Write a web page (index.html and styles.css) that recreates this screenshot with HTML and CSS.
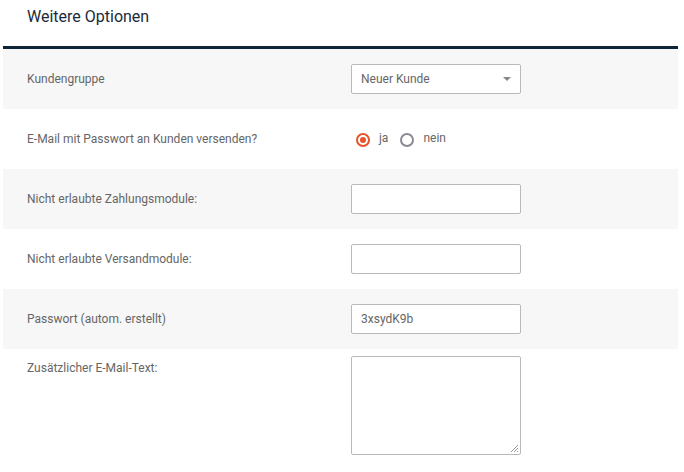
FILE: index.html
```html
<!DOCTYPE html>
<html lang="de">
<head>
<meta charset="utf-8">
<link rel="stylesheet" href="styles.css">
</head>
<body>
<div class="panel">
  <div class="panel-head">
    <h2 class="panel-title">Weitere Optionen</h2>
  </div>
  <div class="rows">
    <div class="row alt">
      <div class="label">Kundengruppe</div>
      <div class="field">
        <div class="select"><span>Neuer Kunde</span><span class="caret"></span></div>
      </div>
    </div>
    <div class="row">
      <div class="label">E-Mail mit Passwort an Kunden versenden?</div>
      <div class="field radios">
        <span class="radio checked"></span><span class="radio-label">ja</span>
        <span class="radio"></span><span class="radio-label">nein</span>
      </div>
    </div>
    <div class="row alt">
      <div class="label">Nicht erlaubte Zahlungsmodule:</div>
      <div class="field"><div class="input"></div></div>
    </div>
    <div class="row">
      <div class="label">Nicht erlaubte Versandmodule:</div>
      <div class="field"><div class="input"></div></div>
    </div>
    <div class="row alt">
      <div class="label">Passwort (autom. erstellt)</div>
      <div class="field"><div class="input">3xsydK9b</div></div>
    </div>
    <div class="row top">
      <div class="label">Zusätzlicher E-Mail-Text:</div>
      <div class="field">
        <div class="textarea">
          <svg class="grip" width="9" height="9" viewBox="0 0 9 9">
            <path d="M8 1 L1 8 M8 4 L4 8 M8 7 L7 8" stroke="#999" stroke-width="1" fill="none"/>
          </svg>
        </div>
      </div>
    </div>
  </div>
</div>
</body>
</html>
```
FILE: styles.css
```css
* { box-sizing: border-box; }
body {
  margin: 0;
  background: #fff;
  font-family: Roboto, "Noto Sans", sans-serif;
}
.panel {
  margin: 0 6px 0 3px;
}
.panel-head {
  border-bottom: 3px solid #0e2538;
  height: 49px;
  padding: 7px 24px 0;
}
.panel-title {
  margin: 0;
  font-size: 16px;
  font-weight: 400;
  color: #1c2b3a;
  line-height: 20px;
}
.row {
  display: grid;
  grid-template-columns: 348px 1fr;
  align-items: center;
  height: 60px;
  background: #fff;
}
.row.alt { background: #f7f7f7; }
.row.top {
  align-items: start;
  height: 112px;
  padding-top: 7px;
}
.label {
  padding-left: 24px;
  font-size: 12px;
  color: #666;
}
.row.top .label { padding-top: 5px; }
.select, .input {
  width: 170px;
  height: 30px;
  border: 1px solid #b9b9b9;
  border-radius: 2px;
  background: #fff;
  font-size: 12px;
  color: #666;
  display: flex;
  align-items: center;
  padding: 0 9px;
}
.select { justify-content: space-between; }
.caret {
  width: 0;
  height: 0;
  border-left: 4px solid transparent;
  border-right: 4px solid transparent;
  border-top: 4px solid #888;
}
.radios {
  display: flex;
  align-items: center;
  padding-left: 5px;
  padding-top: 2px;
}
.radio {
  width: 14px;
  height: 14px;
  border-radius: 50%;
  border: 2px solid #8a8a95;
  background: #fff;
  position: relative;
}
.radio.checked { border-color: #e8532b; }
.radio.checked::after {
  content: "";
  position: absolute;
  left: 2px;
  top: 2px;
  width: 6px;
  height: 6px;
  border-radius: 50%;
  background: #e8532b;
}
.radio-label {
  font-size: 12px;
  color: #666;
  margin-left: 9px;
  margin-right: 12px;
  position: relative;
  top: -2px;
}
.textarea {
  width: 170px;
  height: 99px;
  border: 1px solid #b9b9b9;
  border-radius: 2px;
  background: #fff;
  position: relative;
}
.grip {
  position: absolute;
  right: 1px;
  bottom: 1px;
}
```
